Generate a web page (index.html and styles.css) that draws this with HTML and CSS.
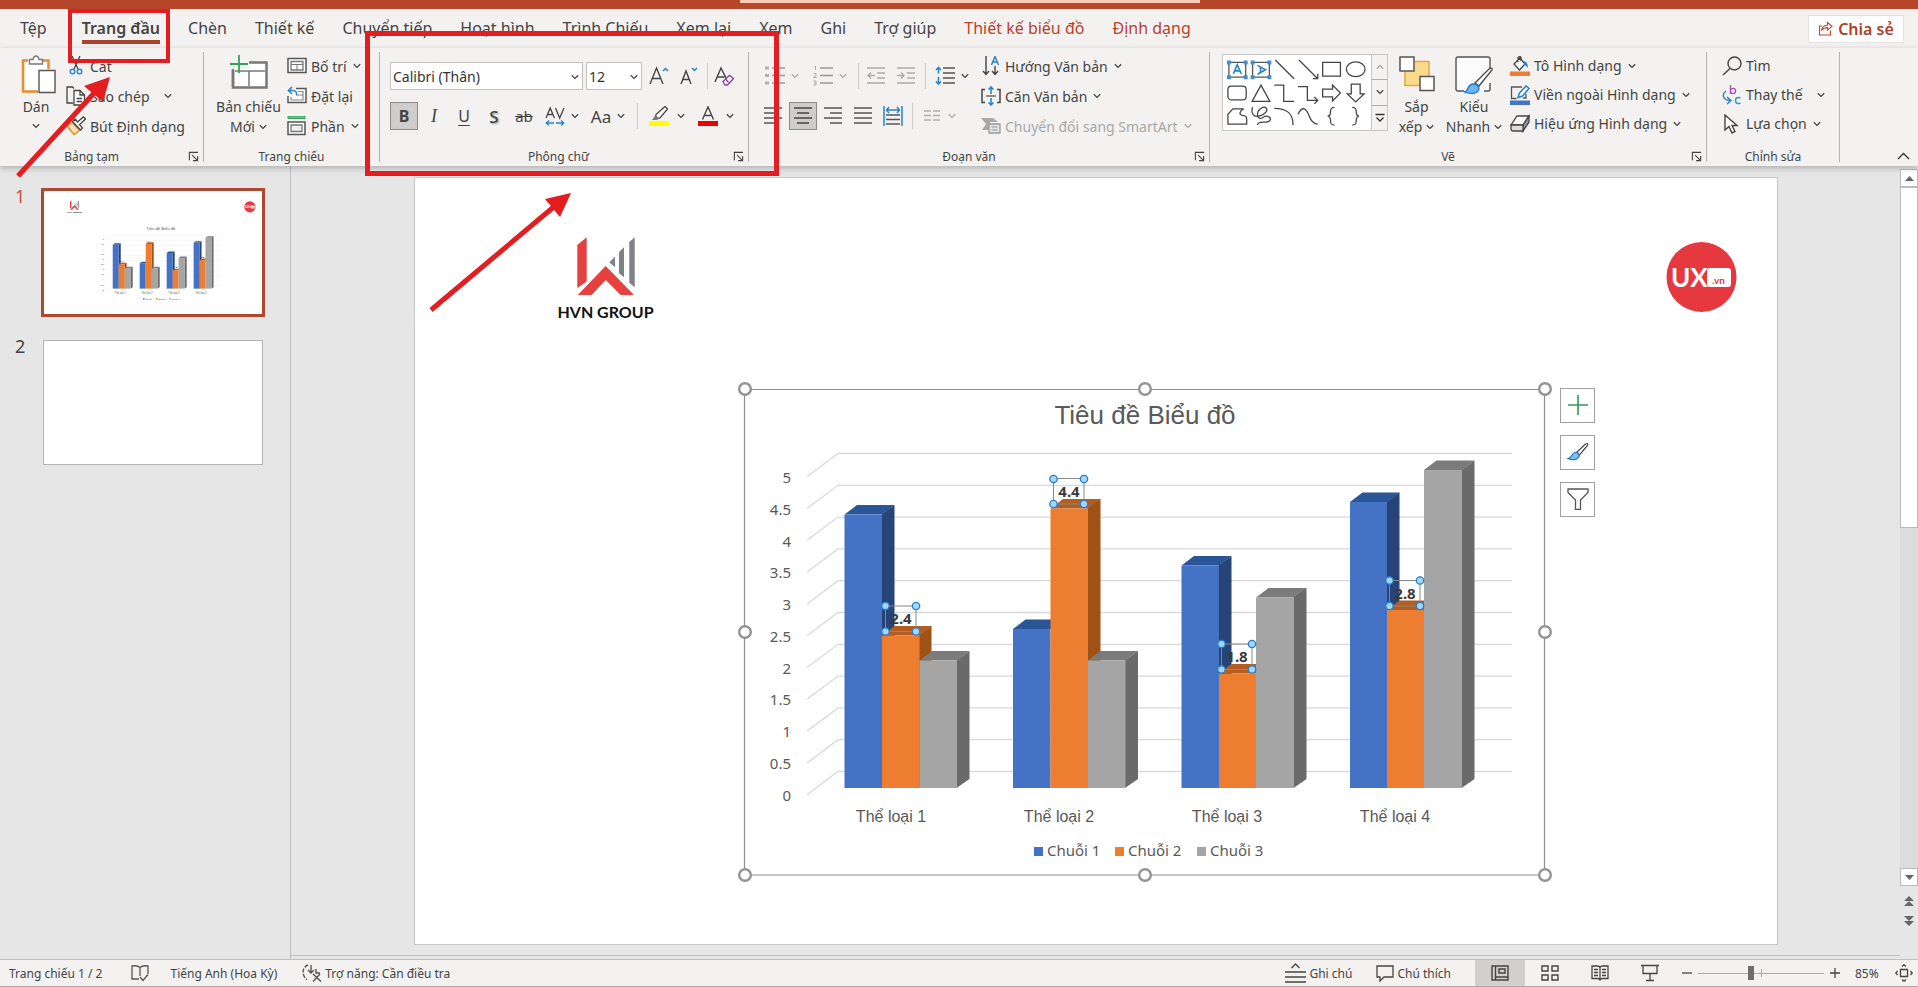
FILE: index.html
```html
<!DOCTYPE html>
<html lang="vi">
<head>
<meta charset="utf-8">
<title>Trình chiếu</title>
<link rel="stylesheet" href="styles.css">
</head>
<body>
<svg class="sprite" aria-hidden="true">
  <symbol id="chev" viewBox="0 0 8 6"><path d="M.8 1.200 4 4.400l3.200-3.200" fill="none" stroke="currentColor" stroke-width="1.300"/></symbol>
  <symbol id="launch" viewBox="0 0 12 12"><path d="M1.500 10V1.500H11M4.500 4.500l5.500 5.500M10.500 5.500v5h-5" fill="none" stroke="#444" stroke-width="1.200"/></symbol>
</svg>

<div class="titlebar"><div class="titlebar-light"></div></div>

<nav class="tabs">
  <button class="tab">Tệp</button>
  <button class="tab tab-active">Trang đầu</button>
  <button class="tab">Chèn</button>
  <button class="tab">Thiết kế</button>
  <button class="tab">Chuyển tiếp</button>
  <button class="tab">Hoạt hình</button>
  <button class="tab">Trình Chiếu</button>
  <button class="tab">Xem lại</button>
  <button class="tab">Xem</button>
  <button class="tab">Ghi</button>
  <button class="tab">Trợ giúp</button>
  <button class="tab tab-context">Thiết kế biểu đồ</button>
  <button class="tab tab-context">Định dạng</button>
  <button class="share">
    <svg width="15" height="15" viewBox="0 0 15 15" fill="none" stroke="#b7472a" stroke-width="1.100"><path d="M4 5H1.500v9h11V9.500M3.500 9.500C4 6 6 4.200 9.500 4.200V1.500L14 5.300 9.500 9V6.500C7 6.500 5 7.500 3.500 9.500z"/></svg>
    Chia sẻ
  </button>
</nav>

<header class="ribbon">
  <section class="group group-clip">
    <div class="group-body">
      <button class="big big-paste">
        <svg class="paste-icon" width="36" height="40" viewBox="0 0 36 40" fill="none"><path d="M7 5.500H2v31h15" stroke="#e3902d" stroke-width="2.500"/><path d="M22 5.500h5.500V14" stroke="#e3902d" stroke-width="2.500"/><path d="M4 7h22v8h-8v20H4z" fill="#fff"/><path d="M8.500 4.500h3.500C12.500 2 13.500 1 15 1s2.500 1 3 3.500h3.500V9h-13z" fill="#fff" stroke="#777" stroke-width="1.300"/><path d="M18 15.500h16v22H18z" fill="#fff" stroke="#555" stroke-width="1.400"/></svg>
        <span class="big-label">Dán</span>
        <svg class="chev"><use href="#chev"/></svg>
      </button>
      <div class="stack">
        <button class="small"><svg class="ic" viewBox="0 0 20 20" fill="none"><path d="M6 0l6 13M14 0L8 13" stroke="#444" stroke-width="1.300"/><circle cx="6.500" cy="15.500" r="2.300" stroke="#2a84c8" stroke-width="1.400"/><circle cx="13.500" cy="15.500" r="2.300" stroke="#2a84c8" stroke-width="1.400"/></svg>Cắt</button>
        <button class="small"><svg class="ic" viewBox="0 0 20 20" fill="none" stroke="#444" stroke-width="1.300"><path d="M7 17H1V1h5.500l1.500 1.500"/><path d="M8 4.500h6l4.500 4.500v10H8z" fill="#fff"/><path d="M14 4.500V9h4.500M10.500 12.500h5.500M10.500 15.500h5.500"/></svg>Sao chép<svg class="chev chev-far"><use href="#chev"/></svg></button>
        <button class="small"><svg class="ic" viewBox="0 0 20 20" fill="none"><path d="M1 10l7 8.500 5.500-4L6 6.500z" fill="#f7dfb8" stroke="#e3902d" stroke-width="1.500"/><path d="M6.500 5.500l8 8.500 2-2-3-3.500L19.500 3l-2-2-6 5-2.500-3z" fill="#fff" stroke="#444" stroke-width="1.300"/></svg>Bút Định dạng</button>
      </div>
    </div>
    <div class="caption">Bảng tạm</div>
    <button class="launcher" aria-label="Bảng tạm"><svg width="11" height="11"><use href="#launch"/></svg></button>
  </section>

  <section class="group group-slides">
    <div class="group-body">
      <button class="big big-slide">
        <svg width="40" height="40" viewBox="0 0 40 40" fill="none"><path d="M4 7.500h33.500v25H4z" fill="#fff" stroke="#777" stroke-width="2.500"/><path d="M6 16h30M20 16v15" stroke="#777" stroke-width="1.500"/><path d="M0 0h20v14H0z" fill="#f3f2f1"/><path d="M4 15v17" stroke="#777" stroke-width="2.500"/><path d="M10 0v18M1 9h18" stroke="#35a05a" stroke-width="1.800"/></svg>
        <span class="big-label">Bản chiếu</span>
        <span class="big-label">Mới <svg class="chev"><use href="#chev"/></svg></span>
      </button>
      <div class="stack">
        <button class="small"><svg class="ic" viewBox="0 0 20 20" fill="none" stroke="#555"><path d="M1 2.500h18v14H1z" fill="#fff" stroke-width="1.500"/><path d="M4 5.500h12v8.500H4z" stroke="#777" stroke-width="1.300"/><path d="M4 8.500h12M10 8.500V14" stroke="#777"/></svg>Bố trí<svg class="chev"><use href="#chev"/></svg></button>
        <button class="small"><svg class="ic" viewBox="0 0 20 20" fill="none"><path d="M9 2.500h10v14H1V10" fill="#fff" stroke="#555" stroke-width="1.500"/><path d="M11 5.500h5V14H4v-3M10 9h6" stroke="#888" stroke-width="1.200"/><path d="M5 1L1.500 4.500 5 8M1.500 4.500H6c3 0 4 2 3.500 5" stroke="#2a84c8" stroke-width="1.600"/></svg>Đặt lại</button>
        <button class="small"><svg class="ic" viewBox="0 0 20 20" fill="none"><path d="M1 0h17v2.500H1z" fill="#6cc388" stroke="#35a05a"/><path d="M1 6h17v12.500H1z" fill="#fff" stroke="#555" stroke-width="1.500"/><path d="M4 9h11v6.500H4z" fill="#eee" stroke="#777" stroke-width="1.300"/></svg>Phần<svg class="chev"><use href="#chev"/></svg></button>
      </div>
    </div>
    <div class="caption">Trang chiếu</div>
  </section>

  <section class="group group-font">
    <div class="tool-rows">
      <div class="tool-row">
        <label class="combo combo-font"><select aria-label="Phông chữ"><option>Calibri (Thân)</option></select><svg class="chev"><use href="#chev"/></svg></label>
        <label class="combo combo-size"><select aria-label="Cỡ chữ"><option>12</option></select><svg class="chev"><use href="#chev"/></svg></label>
        <button class="tool" aria-label="Tăng cỡ chữ"><svg class="ic" viewBox="0 0 20 20" fill="none"><path d="M1 18L7.500 2 14 18M3.500 12.500h8" stroke="#444" stroke-width="1.400"/><path d="M14 5l2.500-2.500L19 5" stroke="#2a84a8" stroke-width="1.500"/></svg></button>
        <button class="tool" aria-label="Giảm cỡ chữ"><svg class="ic" viewBox="0 0 20 20" fill="none"><path d="M2 18L7 5l5 13M4 13.500h6" stroke="#444" stroke-width="1.400"/><path d="M13 2l2.500 2.500L18 2" stroke="#2a84a8" stroke-width="1.500"/></svg></button>
        <span class="sep"></span>
        <button class="tool" aria-label="Xóa định dạng"><svg class="ic" viewBox="0 0 20 20" fill="none"><path d="M1 16L7 2l5 10M3.500 11h7" stroke="#444" stroke-width="1.400"/><path d="M9 15.500l6.500-6 4 3-6 6.500h-2.500z" fill="#fff" stroke="#8e3fa8" stroke-width="1.400"/><path d="M11.500 13l3 3.500" stroke="#8e3fa8" stroke-width="1.300"/></svg></button>
      </div>
      <div class="tool-row">
        <button class="tool tool-on glyph-b">B</button>
        <button class="tool glyph-i">I</button>
        <button class="tool glyph-u">U</button>
        <button class="tool glyph-s">S</button>
        <button class="tool glyph-ab">ab</button>
        <button class="tool tool-drop" aria-label="Giãn cách ký tự"><svg class="ic" viewBox="0 0 20 20" fill="none"><path d="M1 12L5.200 2l4.200 10M2.500 8.500h5.500M10.500 2l4.200 10L19 2" stroke="#444" stroke-width="1.300"/><path d="M4 14.500L1.200 17 4 19.500M1.500 17H9M16 14.500l2.800 2.500-2.800 2.500M18.500 17H11" stroke="#2a84c8" stroke-width="1.300"/></svg><svg class="chev"><use href="#chev"/></svg></button>
        <button class="tool tool-drop"><span class="glyph-aa">Aa</span><svg class="chev"><use href="#chev"/></svg></button>
        <span class="sep sep-wide"></span>
        <button class="tool tool-drop tool-color" aria-label="Màu tô sáng"><svg class="ic" viewBox="0 0 20 20" fill="none"><path d="M0 15h20v5H0z" fill="#ff0"/><path d="M7 8.500l9-8 2.500 2.500-7.500 9-2.500.5L6.500 10z" fill="#fff" stroke="#444" stroke-width="1.300"/><path d="M3 14l3.500-5 3.500 3.500-2 1.500z" fill="#777"/></svg><svg class="chev"><use href="#chev"/></svg></button>
        <button class="tool tool-drop tool-color" aria-label="Màu phông"><svg class="ic" viewBox="0 0 20 20" fill="none"><path d="M0 15h20v5H0z" fill="#f00000"/><path d="M4.500 13.500L10 .8l5.500 12.700M6.500 9.500h7" stroke="#444" stroke-width="1.400"/></svg><svg class="chev"><use href="#chev"/></svg></button>
      </div>
    </div>
    <div class="caption">Phông chữ</div>
    <button class="launcher" aria-label="Phông chữ"><svg width="11" height="11"><use href="#launch"/></svg></button>
  </section>

  <section class="group group-para">
    <div class="group-body">
      <div class="tool-rows">
        <div class="tool-row">
          <button class="tool tool-drop dim" aria-label="Dấu đầu dòng"><svg class="ic" viewBox="0 0 20 20"><path d="M0 .5h4v3H0zM0 8h4v3H0zM0 15.500h4v3H0z" fill="#b0b0b0"/><path d="M7 2h13M7 9.500h13M7 17h13" stroke="#999" stroke-width="1.500"/></svg><svg class="chev"><use href="#chev"/></svg></button>
          <button class="tool tool-drop dim" aria-label="Đánh số"><svg class="ic" viewBox="0 0 20 20" fill="none"><path d="M1 0h1.500v4M.5 7.500h2.500v1.800L.5 11.500h3M.5 15h2.500v4H.5M1 17h2" stroke="#aaa"/><path d="M7 2h13M7 9.500h13M7 17h13" stroke="#999" stroke-width="1.500"/></svg><svg class="chev"><use href="#chev"/></svg></button>
          <span class="sep sep-snug"></span>
          <button class="tool" aria-label="Giảm thụt lề"><svg class="ic" viewBox="0 0 20 20" fill="none" stroke="#aaa" stroke-width="1.400"><path d="M1 2h18M11 7h8M11 12h8M1 17h18M9 9.500H2M5 6.500l-3 3 3 3"/></svg></button>
          <button class="tool" aria-label="Tăng thụt lề"><svg class="ic" viewBox="0 0 20 20" fill="none" stroke="#aaa" stroke-width="1.400"><path d="M1 2h18M11 7h8M11 12h8M1 17h18M1 9.500h7M5 6.500l3 3-3 3"/></svg></button>
          <span class="sep sep-snug"></span>
          <button class="tool tool-drop" aria-label="Giãn cách dòng"><svg class="ic" viewBox="0 0 20 20" fill="none"><path d="M8 2h12M8 7h12M8 12h12M8 17h12" stroke="#555" stroke-width="1.500"/><path d="M3.500 1.500v6M1 4l2.500-2.500L6 4M3.500 11v7M1 15.500L3.500 18 6 15.500" stroke="#2a84c8" stroke-width="1.600"/></svg><svg class="chev"><use href="#chev"/></svg></button>
        </div>
        <div class="tool-row">
          <button class="tool" aria-label="Căn trái"><svg class="ic" viewBox="0 0 20 20" stroke="#555" stroke-width="1.500"><path d="M1 2h18M1 7h12M1 12h18M1 17h12"/></svg></button>
          <button class="tool tool-on" aria-label="Căn giữa"><svg class="ic" viewBox="0 0 20 20" stroke="#444" stroke-width="1.500"><path d="M1 2h18M4 7h12M1 12h18M4 17h12"/></svg></button>
          <button class="tool" aria-label="Căn phải"><svg class="ic" viewBox="0 0 20 20" stroke="#555" stroke-width="1.500"><path d="M1 2h18M7 7h12M1 12h18M7 17h12"/></svg></button>
          <button class="tool" aria-label="Căn đều"><svg class="ic" viewBox="0 0 20 20" stroke="#555" stroke-width="1.500"><path d="M1 2h18M1 7h18M1 12h18M1 17h18"/></svg></button>
          <button class="tool" aria-label="Phân bố"><svg class="ic" viewBox="0 0 20 20" fill="none"><path d="M3 9h14M3 13.500h14M3 18h14" stroke="#555" stroke-width="1.500"/><path d="M1 0v20M19 0v20M3.500 4h13M6 1L3.500 4 6 7M14 1l2.500 3L14 7" stroke="#2a84c8" stroke-width="1.500"/></svg></button>
          <span class="sep sep-snug"></span>
          <button class="tool tool-drop dim" aria-label="Cột"><svg class="ic" viewBox="0 0 20 20" stroke="#b0b0b0" stroke-width="1.500"><path d="M2 5h7M2 9.500h7M2 14h7M11 5h7M11 9.500h7M11 14h7"/></svg><svg class="chev"><use href="#chev"/></svg></button>
        </div>
      </div>
      <div class="stack">
        <button class="small"><svg class="ic" viewBox="0 0 20 20" fill="none"><path d="M5 0v18M2 15l3 3.500L8 15M14 10v8M11 15l3 3.500 3-3.500" stroke="#444" stroke-width="1.400"/><path d="M10.500 9L14 .5 17.500 9M12 6h4" stroke="#2a84c8" stroke-width="1.500"/></svg>Hướng Văn bản<svg class="chev"><use href="#chev"/></svg></button>
        <button class="small"><svg class="ic" viewBox="0 0 20 20" fill="none"><path d="M4 3.500H1v13h3M16 3.500h3v13h-3" stroke="#444" stroke-width="1.500"/><path d="M10 1v7M7.500 3.500L10 1l2.500 2.500M10 12v7M7.500 16.500L10 19l2.500-2.500" stroke="#2a84c8" stroke-width="1.600"/><path d="M5 10h10" stroke="#555" stroke-width="1.300"/></svg>Căn Văn bản<svg class="chev"><use href="#chev"/></svg></button>
        <button class="small dim"><svg class="ic" viewBox="0 0 20 20"><path d="M0 2h12l5 4H9v8H1l4-6z" fill="#a8a8a8"/><path d="M8 8h11v9H8z" fill="#e4e4e4" stroke="#999" stroke-width="1.300"/><path d="M10.500 11h6M10.500 14h6" stroke="#999"/></svg>Chuyển đổi sang SmartArt<svg class="chev"><use href="#chev"/></svg></button>
      </div>
    </div>
    <div class="caption">Đoạn văn</div>
    <button class="launcher" aria-label="Đoạn văn"><svg width="11" height="11"><use href="#launch"/></svg></button>
  </section>

  <section class="group group-draw">
    <div class="group-body">
      <div class="gallery">
        <svg class="shapes" viewBox="0 0 148 76" fill="none" stroke="#444" stroke-width="1.300">
          <path d="M5 7.500h17v15H5z" stroke="#555"/><path d="M9.500 19L13.500 10l4 9M11 16h5" stroke="#2a84c8" stroke-width="1.700"/>
          <path d="M29 7.500h17v15H29z" stroke="#555"/><path d="M34 10.500l8 4.500-8 4.500M37 12.500v5" stroke="#2a84c8" stroke-width="1.700"/>
          <path d="M3 5.500h4v4H3zM20 5.500h4v4h-4zM3 20.500h4v4H3zM20 20.500h4v4h-4zM27 5.500h4v4h-4zM44 5.500h4v4h-4zM27 20.500h4v4h-4zM44 20.500h4v4h-4z" fill="#3c8fd0" stroke="none"/>
          <path d="M52 5l19 19M76 5l19 19M95 19v5h-5"/>
          <path d="M100 7.500h18v14h-18z"/><ellipse cx="133.500" cy="14.500" rx="9.500" ry="7.500"/>
          <rect x="4" y="31.500" width="18.500" height="14" rx="3.500"/><path d="M37.500 30.500l9 16.500h-18z"/>
          <path d="M51 30.500h9.500V47H71M75 32h9.500v14H95M91.500 42.500L95 46l-3.500 3.500"/>
          <path d="M100 34.500h10v-4l8 8-8 8v-4h-10zM129 29.500h9v10h4l-8.500 8-8.500-8h4z"/>
          <path d="M4 70V60l5-5.500h11c-4 2-5 6-2 6.500s5 .5 5 4V70z"/>
          <path d="M29 53c-2 6 1 10 6 9s10-5 8-8-9 1-9 6 4 5 6 3 7-1 7 2-5 3-7 3-6 0-6 3"/>
          <path d="M51 54c13 0 19 5 19 17M75 60c4-8 8-7 11 1s6 9 9 9"/>
          <path d="M112 53c-4 0-4 2-4 4s0 5-3 5c3 0 3 3 3 5s0 4 4 4M130 53c4 0 4 2 4 4s0 5 3 5c-3 0-3 3-3 5s0 4-4 4"/>
        </svg>
        <div class="gallery-nav">
          <button class="dim" aria-label="Lên"><svg class="chev flip"><use href="#chev"/></svg></button>
          <button aria-label="Xuống"><svg class="chev"><use href="#chev"/></svg></button>
          <button aria-label="Thêm"><svg width="10" height="10" viewBox="0 0 10 10" fill="none" stroke="#333" stroke-width="1.300"><path d="M.5 1.500h9M1.500 4.500L5 8l3.500-3.500"/></svg></button>
        </div>
      </div>
      <button class="big big-arrange">
        <svg width="36" height="40" viewBox="0 0 36 40"><path d="M6 6.500h24v24H6z" fill="#f8dc8c" stroke="#e8a53a" stroke-width="1.500"/><path d="M1 2h14v14H1zM21 21.500h14v14H21z" fill="#fff" stroke="#555" stroke-width="1.500"/></svg>
        <span class="big-label">Sắp</span>
        <span class="big-label">xếp <svg class="chev"><use href="#chev"/></svg></span>
      </button>
      <button class="big big-styles">
        <svg width="40" height="40" viewBox="0 0 40 40"><path d="M3 3h32v32H3z" fill="#fbfbfb"/><path d="M10 36H4q-2 0-2-2V4q0-2 2-2h30q2 0 2 2v10M36 28v6q0 2-2 2h-4" fill="none" stroke="#555" stroke-width="1.400"/><path d="M21 28L35 14q4-2 3 1L25 31z" fill="#fff" stroke="#444" stroke-width="1.300"/><path d="M10 37c5 0 3-8 9-8s7 4 5 7-9 3-14 1z" fill="#6db4f0" stroke="#1f78c8" stroke-width="1.300"/></svg>
        <span class="big-label">Kiểu</span>
        <span class="big-label">Nhanh <svg class="chev"><use href="#chev"/></svg></span>
      </button>
      <div class="stack stack-tight">
        <button class="small"><svg class="ic" viewBox="0 0 20 20"><path d="M0 15.500h20v4.500H0z" fill="#ed7d31"/><path d="M4 8l6-6 5 6-5.500 6zM8 6V1.500q2-2 3 0V5" fill="#fff" stroke="#444" stroke-width="1.300"/><path d="M14 5q4 1 4 7-2-3-4-3z" fill="#2a84c8"/></svg>Tô Hình dạng<svg class="chev"><use href="#chev"/></svg></button>
        <button class="small"><svg class="ic" viewBox="0 0 20 20"><path d="M0 15.500h20v4.500H0z" fill="#4472c4"/><path d="M12 2H1.500v11.500h5M16 9v4h-3" fill="none" stroke="#555" stroke-width="1.300"/><path d="M8 12.500l1.500-4.500L16 1l3 2.500-6.500 7.500z" fill="#fff" stroke="#2a84c8" stroke-width="1.500"/></svg>Viền ngoài Hình dạng<svg class="chev"><use href="#chev"/></svg></button>
        <button class="small"><svg class="ic" viewBox="0 0 20 20" stroke="#444" stroke-width="1.300"><path d="M1 11L7 2h12l-6 9z" fill="#fff"/><path d="M13 11l6-9v6l-6 9z" fill="#999"/><path d="M1 11h12v6H3q-2 0-2-2z" fill="#ddd"/></svg>Hiệu ứng Hình dạng<svg class="chev"><use href="#chev"/></svg></button>
      </div>
    </div>
    <div class="caption">Vẽ</div>
    <button class="launcher" aria-label="Vẽ"><svg width="11" height="11"><use href="#launch"/></svg></button>
  </section>

  <section class="group group-edit">
    <div class="group-body">
      <div class="stack stack-tight">
        <button class="small"><svg class="ic" viewBox="0 0 20 20" fill="none" stroke="#444" stroke-width="1.400"><circle cx="12.500" cy="7.500" r="6.500"/><path d="M8 12.500L1 19"/></svg>Tìm</button>
        <button class="small"><svg class="ic" viewBox="0 0 20 20" fill="none"><path d="M8.500 0v9M8.500 6c0-3.500 5-3.500 5 0s-5 3.500-5 0" stroke="#b050c0" stroke-width="1.400"/><path d="M18.500 13c-3-1.500-5 0-5 2.500s2 4 5 2.500" stroke="#2a9ad0" stroke-width="1.500"/><path d="M4 6C0 9 0 15 8 15.500M5 12l4 3.500L5 19" stroke="#2a84c8" stroke-width="1.500"/></svg>Thay thế<svg class="chev chev-far"><use href="#chev"/></svg></button>
        <button class="small"><svg class="ic" viewBox="0 0 20 20"><path d="M3 1v15l4-3.500 3 6.500 3-1.500-3-6h5z" fill="#fff" stroke="#444" stroke-width="1.400"/></svg>Lựa chọn<svg class="chev"><use href="#chev"/></svg></button>
      </div>
    </div>
    <div class="caption">Chỉnh sửa</div>
  </section>

  <button class="collapse" aria-label="Thu gọn"><svg width="13" height="8" viewBox="0 0 13 8" fill="none" stroke="#333" stroke-width="1.400"><path d="M1 7l5.500-5.500L12 7"/></svg></button>
</header>

<main class="workspace">
  <aside class="thumbs">
    <div class="thumb-row">
      <span class="thumb-num thumb-num-on">1</span>
      <div class="thumb thumb-on"><svg viewBox="415 178 1362 766"><use href="#slide-art"/></svg></div>
    </div>
    <div class="thumb-row">
      <span class="thumb-num">2</span>
      <div class="thumb"></div>
    </div>
  </aside>

  <div class="stage">
    <div class="slide">
      <svg class="slide-svg" viewBox="415 178 1362 766">
        <g id="slide-art">
          <path d="M577.300 245l9.400-7.700v44.200l-9.400 6.500zM605.700 266l28.300 29h-13.300l-15-15-14 15h-14z" fill="#e6413f"/>
          <path d="M634.700 237.300v50l-5.400-4.600V242zM624 247.300v30l-5-4V252zM615 256.700v10.600l-5.700-5z" fill="#808184"/>
          <text class="logo-name" x="605.500" y="318">HVN GROUP</text>
          <circle cx="1701.500" cy="277" r="35" fill="#e6393f"/>
          <text class="logo-ux" x="1671" y="287">UX</text>
          <rect x="1707" y="268" width="24" height="19" rx="3" fill="#fff"/>
          <text class="logo-vn" x="1712" y="284">.vn</text>

          <text class="chart-title" x="1145" y="424">Tiêu đề Biểu đồ</text>
          <path class="grid" d="M807 476.700l31-23.200h674M807 508.500l31-23.200h674M807 540.300l31-23.200h674M807 572.100l31-23.200h674M807 603.900l31-23.200h674M807 635.700l31-23.200h674M807 667.500l31-23.200h674M807 699.300l31-23.200h674M807 731.100l31-23.200h674M807 762.900l31-23.200h674M807 794.700l31-23.200h674"/>
          <g class="axis">
            <text x="791" y="483">5</text><text x="791" y="515">4.5</text><text x="791" y="547">4</text><text x="791" y="578">3.5</text><text x="791" y="610">3</text><text x="791" y="642">2.5</text><text x="791" y="674">2</text><text x="791" y="705">1.5</text><text x="791" y="737">1</text><text x="791" y="769">0.5</text><text x="791" y="801">0</text>
          </g>
          <g class="bars">
            <path class="b-side" d="M882 514l12.500-9v274l-12.500 9z"/><path class="b-top" d="M844.500 514.500l12.500-9.500h37.500l-12.500 9.500z"/><path class="b" d="M844.500 514.500H882V788h-37.500z"/>
            <path class="o-side" d="M919 635l12.500-9v153l-12.500 9z"/><path class="o-top" d="M882 635.500l12.500-9.500h37.500l-12.500 9.500z"/><path class="o" d="M882 635.500h37.500V788H882z"/>
            <path class="g-side" d="M956.500 660.500l13-9.500v128l-13 9z"/><path class="g-top" d="M919.500 660.500l12.500-9.500h37.500l-12.500 9.500z"/><path class="g" d="M919.500 660.500H957V788h-37.500z"/>

            <path class="b-top" d="M1013 629l12.500-9.500h37.500L1050.500 629z"/><path class="b" d="M1013 629h37.500v159H1013z"/>
            <path class="o-side" d="M1087.500 508l13-9.500V779l-13 9z"/><path class="o-top" d="M1050.500 508.500l12.500-9.500h37.500l-12.500 9.500z"/><path class="o" d="M1050.500 508.500h37.500V788h-37.500z"/>
            <path class="g-side" d="M1125 660.500l13-9.500v128l-13 9z"/><path class="g-top" d="M1088 660.500l12.500-9.500h37.500l-12.500 9.500z"/><path class="g" d="M1088 660.500h37.500V788H1088z"/>

            <path class="b-side" d="M1218.500 565.500l13-9.500v223l-13 9z"/><path class="b-top" d="M1181.500 565.500L1194 556h37.500l-12.500 9.500z"/><path class="b" d="M1181.500 565.500h37.500V788h-37.500z"/>
            <path class="o-top" d="M1219 673.500l12.500-9.500h37.500l-12.500 9.500z"/><path class="o" d="M1219 673.500h37.500V788H1219z"/>
            <path class="g-side" d="M1293.500 597l13-9.500V779l-13 9z"/><path class="g-top" d="M1256 597.500l12.500-9.500h37.500l-12.500 9.500z"/><path class="g" d="M1256 597.500h38V788h-38z"/>

            <path class="b-side" d="M1386.500 502l13-9.500V779l-13 9z"/><path class="b-top" d="M1350 502l12.500-9.500h37.500L1387 502z"/><path class="b" d="M1350 502h37v286h-37z"/>
            <path class="o-top" d="M1387 610l12.500-9.500h37.500l-12.500 9.500z"/><path class="o" d="M1387 610h37.500v178H1387z"/>
            <path class="g-side" d="M1461.500 470l13-9.500V779l-13 9z"/><path class="g-top" d="M1424 470l12.500-9.500h38L1462 470z"/><path class="g" d="M1424 470h38v318h-38z"/>
          </g>
          <g class="vals">
            <text x="901" y="624">2.4</text><text x="1069" y="497">4.4</text><text x="1237" y="662">1.8</text><text x="1405" y="599">2.8</text>
          </g>
          <g class="cats">
            <text x="891" y="822">Thể loại 1</text><text x="1059" y="822">Thể loại 2</text><text x="1227" y="822">Thể loại 3</text><text x="1395" y="822">Thể loại 4</text>
          </g>
          <path d="M1034 847h9v9h-9z" fill="#4472c4"/><path d="M1115 847h9v9h-9z" fill="#ed7d31"/><path d="M1197 847h9v9h-9z" fill="#a5a5a5"/>
          <g class="legend"><text x="1047" y="856">Chuỗi 1</text><text x="1128" y="856">Chuỗi 2</text><text x="1210" y="856">Chuỗi 3</text></g>
        </g>
        <g class="marks">
          <path d="M885.500 606H916v25.500h-30.500zM1053.500 478.500H1084V504h-30.500zM1221.500 644H1252v25.500h-30.500zM1389.500 580.500H1420V606h-30.500z" fill="none" stroke="#888" stroke-width="1"/>
          <g fill="#a6d5fa" stroke="#2080cc" stroke-width="1.300">
            <circle cx="885.500" cy="606" r="3.700"/><circle cx="916" cy="606" r="3.700"/><circle cx="885.500" cy="631.500" r="3.700"/><circle cx="916" cy="631.500" r="3.700"/>
            <circle cx="1053.500" cy="479" r="3.700"/><circle cx="1084" cy="479" r="3.700"/><circle cx="1053.500" cy="504" r="3.700"/><circle cx="1084" cy="504" r="3.700"/>
            <circle cx="1221.500" cy="644" r="3.700"/><circle cx="1252" cy="644" r="3.700"/><circle cx="1221.500" cy="669.500" r="3.700"/><circle cx="1252" cy="669.500" r="3.700"/>
            <circle cx="1389.500" cy="580.500" r="3.700"/><circle cx="1420" cy="580.500" r="3.700"/><circle cx="1389.500" cy="606" r="3.700"/><circle cx="1420" cy="606" r="3.700"/>
          </g>
          <path d="M744.500 389.500h800v485.500h-800z" fill="none" stroke="#8f8f8f" stroke-width="1.200"/>
          <g fill="#fff" stroke="#939393" stroke-width="2.400">
            <circle cx="745" cy="389" r="5.800"/><circle cx="1145" cy="389" r="5.800"/><circle cx="1545" cy="389" r="5.800"/><circle cx="745" cy="632" r="5.800"/><circle cx="1545" cy="632" r="5.800"/><circle cx="745" cy="875" r="5.800"/><circle cx="1145" cy="875" r="5.800"/><circle cx="1545" cy="875" r="5.800"/>
          </g>
        </g>
      </svg>
      <div class="chart-tools">
        <button aria-label="Thành phần biểu đồ"><svg width="22" height="22" viewBox="0 0 22 22"><path d="M11 1v20M1 11h20" stroke="#2e9a5c" stroke-width="1.600"/></svg></button>
        <button aria-label="Kiểu biểu đồ"><svg width="22" height="22" viewBox="0 0 22 22"><path d="M9.500 11.500L18.500 3q3-1.500 2 1.500L12.500 14z" fill="#fff" stroke="#444" stroke-width="1.200"/><path d="M1 17.500c4 0 3.500-5.500 7-6s5 2.500 3.500 5-7 3-10.500 1z" fill="#7cc0f2" stroke="#1f78b8" stroke-width="1.200"/></svg></button>
        <button aria-label="Bộ lọc biểu đồ"><svg width="22" height="22" viewBox="0 0 22 22"><path d="M1 1h20v3.500L13.500 12v9.500h-5V12L1 4.500z" fill="#fff" stroke="#555" stroke-width="1.300"/></svg></button>
      </div>
    </div>
  </div>

  <div class="scroll">
    <button class="scroll-btn" aria-label="Lên"><svg width="9" height="5"><path d="M4.500 0L9 5H0z" fill="#666"/></svg></button>
    <div class="scroll-track"><div class="scroll-thumb"></div></div>
    <button class="scroll-btn" aria-label="Xuống"><svg width="9" height="5"><path d="M0 0h9L4.500 5z" fill="#666"/></svg></button>
    <button class="page-btn" aria-label="Trang trước"><svg width="10" height="10"><path d="M5 0l5 5H0zM5 5l5 5H0z" fill="#666"/></svg></button>
    <button class="page-btn" aria-label="Trang sau"><svg width="10" height="10"><path d="M0 0h10L5 5zM0 5h10l-5 5z" fill="#666"/></svg></button>
  </div>
</main>

<footer class="status">
  <span>Trang chiếu 1 / 2</span>
  <svg class="st-book" width="18" height="18" viewBox="0 0 18 18" fill="none" stroke="#555" stroke-width="1.300"><path d="M9 3.500C7 1.500 4 1.500 1 2v13h7M9 3.500C11 1.500 14 1.500 17 2v8M9 3.500V12M9 13l3 3.500 5-6"/></svg>
  <span>Tiếng Anh (Hoa Kỳ)</span>
  <button class="st-btn st-access"><svg width="20" height="18" viewBox="0 0 20 18" fill="none" stroke="#555" stroke-width="1.400"><path d="M6 1C1 3 0 8 2 12q1 2.500 3 3.500" stroke-dasharray="4 1.500"/><path d="M9 1v7M6 6l3 3 3-3M11 10l8 7.500M18 10l-7 7.500M14 5v4h4"/></svg>Trợ năng: Cần điều tra</button>
  <span class="spacer"></span>
  <button class="st-btn st-notes"><svg width="21" height="20" viewBox="0 0 21 20" fill="none" stroke="#444" stroke-width="1.300"><path d="M0 9h21M0 14h21M0 19h21M6.500 5l4-4 4 4"/></svg>Ghi chú</button>
  <button class="st-btn st-comments"><svg width="18" height="17" viewBox="0 0 18 17" fill="none" stroke="#444" stroke-width="1.300"><path d="M1 1h16v11H8l-4 4v-4H1z"/></svg>Chú thích</button>
  <button class="view view-on" aria-label="Thường"><svg width="18" height="16" viewBox="0 0 18 16" fill="none" stroke="#444" stroke-width="1.400"><path d="M1 1h16v14H1zM4.500 1v14M4.500 12H17M8 4h6v4H8z"/></svg></button>
  <button class="view" aria-label="Bộ sắp xếp"><svg width="18" height="16" viewBox="0 0 18 16" fill="none" stroke="#444" stroke-width="1.400"><path d="M1 1h6v5H1zM11 1h6v5h-6zM1 10h6v5H1zM11 10h6v5h-6z"/></svg></button>
  <button class="view" aria-label="Đọc"><svg width="18" height="16" viewBox="0 0 18 16" fill="none" stroke="#444" stroke-width="1.300"><path d="M1 1h5q3 0 3 2 0-2 3-2h5v12.500h-5q-3 0-3 2 0-2-3-2H1zM9 3v12M3 4.500h4M3 7.500h4M3 10.500h4M11 4.500h4M11 7.500h4M11 10.500h4"/></svg></button>
  <button class="view" aria-label="Trình chiếu"><svg width="18" height="18" viewBox="0 0 18 18" fill="none" stroke="#444" stroke-width="1.300"><path d="M0 1.500h18M2 1.500v8h14v-8M9 9.500V16M5 16.500h8"/></svg></button>
  <button class="zoom-btn" aria-label="Thu nhỏ"><svg width="12" height="12"><path d="M1 6h10" stroke="#444" stroke-width="1.300"/></svg></button>
  <label class="zoom"><input type="range" min="0" max="100" value="42" aria-label="Thu phóng"></label>
  <button class="zoom-btn" aria-label="Phóng to"><svg width="12" height="12"><path d="M1 6h10M6 1v10" stroke="#444" stroke-width="1.300"/></svg></button>
  <span class="pct">85%</span>
  <button class="zoom-btn" aria-label="Vừa cửa sổ"><svg width="18" height="18" viewBox="0 0 18 18" fill="none" stroke="#444" stroke-width="1.300"><path d="M5.500 5.500h7v7h-7zM7 2.500L9 .8l2 1.700M7 15.500l2 1.700 2-1.700M2.500 7L.8 9l1.700 2M15.500 7l1.700 2-1.700 2"/></svg></button>
</footer>

<svg class="annot" width="800" height="330" viewBox="0 0 800 330" fill="none" stroke="#e51c20">
  <path d="M70 11h98v50H70z" stroke-width="4"/>
  <path d="M367.500 33.500h409v140h-409z" stroke-width="5"/>
  <path d="M18 176L96 91M431 310l125-105" stroke-width="5"/>
  <path d="M110 77l-7 25-19-16zM571 193l-11 24-15-18z" fill="#e51c20" stroke="none"/>
</svg>
</body>
</html>
```
FILE: styles.css
```css
* { box-sizing: border-box; }
html, body { height: 100%; }
body {
  margin: 0;
  display: flex;
  flex-direction: column;
  position: relative;
  overflow: hidden;
  background: #e6e6e6;
  color: #444;
  font-family: "Noto Sans", "Open Sans", sans-serif;
  font-size: 14px;
}
button {
  margin: 0;
  padding: 0;
  border: 0;
  background: none;
  color: inherit;
  font: inherit;
}
svg { display: block; flex: none; }
.sprite { position: absolute; width: 0; height: 0; }
.chev { width: 8px; height: 6px; color: #444; }
.ic { width: 20px; height: 20px; }
.dim, .dim .chev { color: #a8a8a8; }

.titlebar { flex: none; height: 9px; background: #b7472a; }
.titlebar-light { width: 24%; height: 3px; margin-left: 740px; background: #fbc9b5; }

.tabs {
  flex: none;
  display: flex;
  align-items: center;
  gap: 28px;
  height: 39px;
  padding: 2px 14px 0 20px;
  background: #f3f2f1;
  font-size: 16px;
}
.tab {
  height: 28px;
  border-bottom: 4px solid transparent;
  line-height: 22px;
  white-space: nowrap;
}
.tab:first-child { margin-right: 7px; }
.tab-active { font-weight: 600; border-color: #a8432e; }
.tab-context { color: #b8412c; }
.share {
  display: flex;
  align-items: center;
  justify-content: center;
  gap: 5px;
  width: 96px;
  height: 28px;
  margin: 0 0 2px auto;
  border: 1px solid #e4e2e0;
  background: #fff;
  color: #b0402a;
  font-size: 16px;
  font-weight: 600;
}

.ribbon {
  flex: none;
  display: flex;
  position: relative;
  z-index: 1;
  height: 118px;
  padding: 4px 0;
  background: #f3f2f1;
  box-shadow: 0 2px 6px rgba(0, 0, 0, .25);
}
.group {
  flex: none;
  position: relative;
  display: flex;
  flex-direction: column;
  height: 110px;
  border-right: 1px solid #b4b2b0;
}
.group-clip { width: 204px; }
.group-slides { width: 176px; }
.group-font { width: 369px; padding-left: 9px; }
.group-para { width: 461px; }
.group-draw { width: 497px; }
.group-edit { width: 133px; }
.group-body { display: flex; height: 92px; }
.caption {
  height: 18px;
  margin-right: 20px;
  font-size: 12px;
  line-height: 26px;
  text-align: center;
  white-space: nowrap;
}
.group-slides .caption, .group-edit .caption { margin: 0; }
.launcher { position: absolute; right: 4px; bottom: 0; }

.big {
  display: flex;
  flex-direction: column;
  align-items: center;
  padding-top: 3px;
}
.big-label {
  display: flex;
  align-items: center;
  gap: 4px;
  height: 20px;
  line-height: 20px;
  white-space: nowrap;
}
.big-label:first-of-type { margin-top: 2px; }
.big-paste { width: 66px; padding-left: 6px; }
.paste-icon { margin-left: 6px; }
.big-paste .chev { margin-top: 6px; }
.big-slide { width: 83px; padding-left: 6px; }
.big-arrange { width: 57px; }
.big-styles { width: 58px; }

.stack { display: flex; flex-direction: column; }
.small {
  display: flex;
  align-items: center;
  gap: 4px;
  height: 30px;
  padding-bottom: 2px;
  white-space: nowrap;
  text-align: left;
}
.stack-tight .small { height: 29px; }
.small .chev { margin-left: 2px; }
.small .chev-far { margin-left: 10px; }

.tool-rows { display: flex; flex-direction: column; gap: 12px; height: 92px; padding-top: 10px; }
.tool-row { display: flex; align-items: center; height: 28px; }
.tool {
  display: flex;
  align-items: center;
  justify-content: center;
  width: 28px;
  height: 28px;
  margin-right: 2px;
  font-size: 18px;
}
.tool-drop { width: 46px; gap: 6px; }
.tool-on { background: #cfcdcb; border: 1px solid #8d8b89; }
.sep { width: 1px; height: 26px; margin: 0 2px; background: #d0cecc; }
.sep-snug { margin: 0 3px; }
.sep-wide { margin: 0 5px; }
.glyph-b { font-weight: 700; font-size: 16px; }
.glyph-i { font-family: "Liberation Serif", serif; font-style: italic; }
.glyph-u { font-size: 16px; text-decoration: underline; text-underline-offset: 3px; }
.glyph-s { font-size: 17px; text-shadow: 1px 1px 2px #999; font-weight: 500; }
.glyph-ab { font-size: 15px; text-decoration: line-through; }
.glyph-aa { font-size: 17px; }
.combo { position: relative; margin-right: 3px; }
.combo select {
  appearance: none;
  width: 100%;
  height: 28px;
  padding: 0 2px;
  border: 1px solid #c4c2c0;
  border-radius: 0;
  background: #fff;
  color: #333;
  font: inherit;
}
.combo .chev { position: absolute; right: 4px; top: 12px; }
.combo-font { width: 193px; }
.combo-size { width: 56px; }
.group-font .tool-row { padding-left: 1px; }
.group-font .tool-drop { width: 44px; }
.group-font .tool-color { width: 47px; gap: 8px; }
.group-para .tool-rows { width: 232px; padding-left: 10px; }

.gallery {
  display: flex;
  width: 166px;
  height: 77px;
  margin: 2px 0 0 12px;
  border: 1px solid #c8c6c4;
  background: #fff;
}
.shapes { width: 148px; height: 75px; }
.gallery-nav { flex: 1; display: flex; flex-direction: column; background: #f3f2f1; }
.gallery-nav button {
  flex: 1;
  display: flex;
  align-items: center;
  justify-content: center;
  border-left: 1px solid #c8c6c4;
}
.gallery-nav button + button { border-top: 1px solid #b0aeac; }
.flip { transform: rotate(180deg); }
.group-draw .stack { padding-left: 7px; }
.group-edit .stack { padding-left: 15px; }
.collapse { margin: auto 8px 2px auto; }

.workspace { flex: 1; display: flex; min-height: 0; }
.thumbs {
  flex: none;
  display: flex;
  flex-direction: column;
  gap: 27px;
  width: 291px;
  padding-top: 25px;
  border-right: 1px solid #bdbdbd;
}
.thumb-row { display: flex; gap: 17px; padding-left: 15px; }
.thumb-num { width: 10px; font-size: 18px; line-height: 10px; }
.thumb-num-on { color: #c8503a; }
.thumb { width: 218px; height: 123px; margin: 0 2px; background: #fff; outline: 1px solid #b4b4b4; }
.thumb-on { outline: 3px solid #b0472f; }

.stage {
  flex: 1;
  display: flex;
  justify-content: center;
  min-width: 0;
  padding: 12px 0 11px 1px;
  margin-bottom: 3px;
  border-bottom: 1px solid #c0c0c0;
}
.slide {
  position: relative;
  height: 100%;
  aspect-ratio: 1362 / 766;
  background: #fff;
  outline: 1px solid #c6c6c6;
}
.slide-svg { width: 100%; height: 100%; }
.chart-tools {
  position: absolute;
  left: 84.1%;
  top: 27.4%;
  display: flex;
  flex-direction: column;
  gap: 12px;
}
.chart-tools button {
  display: flex;
  align-items: center;
  justify-content: center;
  width: 35px;
  height: 35px;
  border: 1px solid #a0a0a0;
  background: #fff;
}
.grid { fill: none; stroke: #d9d9d9; stroke-width: 1.3; }
.chart-title { font: 26px "Liberation Sans", sans-serif; fill: #595959; text-anchor: middle; }
.axis { font-size: 15px; fill: #595959; text-anchor: end; }
.vals { font-size: 15px; font-weight: 700; fill: #3a3a3a; text-anchor: middle; }
.cats { font: 16px "Liberation Sans", sans-serif; fill: #595959; text-anchor: middle; }
.legend { font-size: 15px; fill: #595959; }
.b { fill: #4472c4; }
.b-top { fill: #2a5597; }
.b-side { fill: #264478; }
.o { fill: #ed7d31; }
.o-top { fill: #b35e20; }
.o-side { fill: #9e5216; }
.g { fill: #a5a5a5; }
.g-top { fill: #7b7b7b; }
.g-side { fill: #6a6a6a; }
.logo-name { font: 700 16px Lato, sans-serif; fill: #111; text-anchor: middle; }
.logo-ux { font: 700 26px Lato, sans-serif; fill: #fff; }
.logo-vn { font: 700 10px Lato, sans-serif; fill: #e6393f; }

.scroll { flex: none; display: flex; flex-direction: column; width: 18px; padding: 3px 0 33px; }
.scroll-btn {
  display: flex;
  align-items: center;
  justify-content: center;
  height: 18px;
  border: 1px solid #bbb;
  background: #fff;
}
.scroll-track { flex: 1; background: #dcdcdc; }
.scroll-thumb { height: 50%; border: 1px solid #bbb; background: #fff; }
.page-btn { display: flex; justify-content: center; margin-top: 10px; }

.status {
  flex: none;
  display: flex;
  align-items: center;
  height: 28px;
  padding: 0 5px 0 9px;
  border-top: 1px solid #c0c0c0;
  border-bottom: 1px solid #a8a8a8;
  background: #f3f2f1;
  font-size: 12px;
  white-space: nowrap;
}
.st-book { margin: 0 21px 0 29px; }
.st-btn { display: flex; align-items: center; gap: 3px; }
.st-access { margin-left: 25px; }
.st-notes { margin-right: 24px; }
.st-comments { margin-right: 24px; }
.spacer { flex: 1; }
.view { display: flex; align-items: center; justify-content: center; width: 50px; height: 26px; }
.view-on { background: #d2d0ce; }
.zoom-btn { display: flex; }
.view + .zoom-btn { margin-left: 6px; }
.zoom { display: flex; width: 126px; margin: 0 5px; }
.zoom input {
  appearance: none;
  width: 100%;
  height: 14px;
  margin: 0;
  background: linear-gradient(#aaa, #aaa) center / 100% 1px no-repeat, linear-gradient(#aaa, #aaa) 50% 50% / 1px 8px no-repeat;
}
.zoom input::-webkit-slider-thumb { appearance: none; width: 6px; height: 14px; background: #6e6e6e; }
.pct { width: 26px; margin: 0 14px; }

.annot { position: absolute; left: 0; top: 0; z-index: 2; pointer-events: none; }
```
